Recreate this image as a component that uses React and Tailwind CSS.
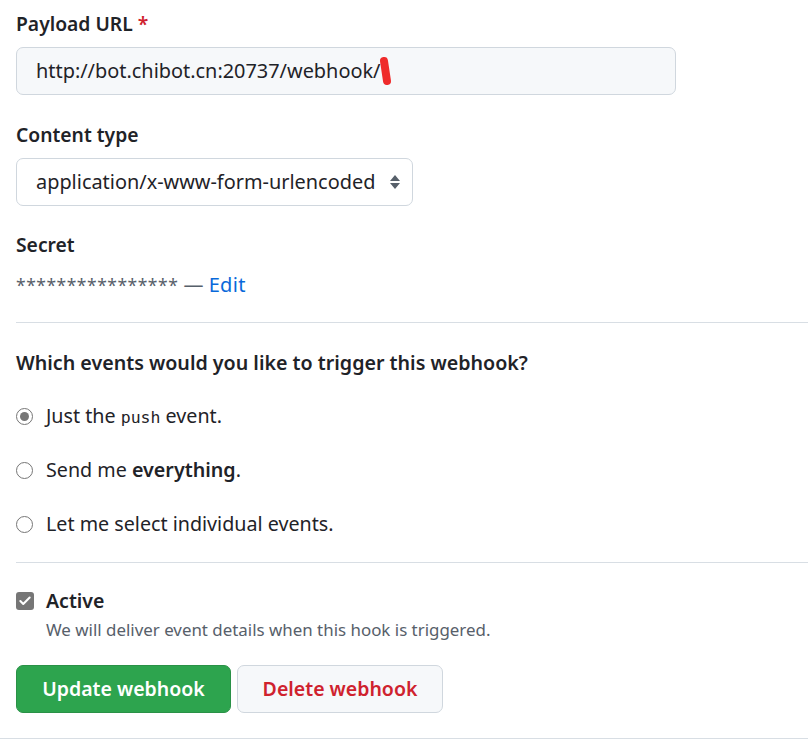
import { Check } from 'lucide-react'

const FONT = { fontFamily: '"Noto Sans", "Liberation Sans", sans-serif' }

function Radio({ checked, children }) {
  return (
    <label className="flex items-center gap-[13px] h-[24px]">
      <span className="w-[17px] h-[17px] rounded-full border border-[#767676] bg-white flex items-center justify-center">
        {checked && <span className="w-[9px] h-[9px] rounded-full bg-[#767676]" />}
      </span>
      <span className="text-[19.7px] text-[#1f2328]">{children}</span>
    </label>
  )
}

export default function App() {
  return (
    <div className="w-[808px] h-[741px] bg-white overflow-hidden text-[#1f2328]" style={FONT}>
      <div className="pl-[16px]">
        {/* Payload URL */}
        <div className="pt-[10px]">
          <div className="text-[19.3px] font-semibold leading-[28px]">
            Payload URL <span className="text-[#cf222e]">*</span>
          </div>
          <div className="mt-[9px] w-[660px] h-[48px] rounded-[7px] border border-[#d0d7de] bg-[#f6f8fa] flex items-center pl-[19px] text-[19.9px]">
            <span>http://bot.chibot.cn:20737/webhook/</span>
            <svg width="14" height="30" viewBox="0 0 14 30" className="-ml-[1px]">
              <path d="M5 5 L8 25" stroke="#ef2b2b" strokeWidth="8" strokeLinecap="round" />
            </svg>
          </div>
        </div>

        {/* Content type */}
        <div className="pt-[26px]">
          <div className="text-[19.3px] font-semibold leading-[28px]">Content type</div>
          <div className="mt-[9px] w-[397px] h-[48px] rounded-[7px] border border-[#d0d7de] bg-white flex items-center justify-between pl-[19px] pr-[12px] text-[19.9px]">
            <span>application/x-www-form-urlencoded</span>
            <svg width="10" height="16" viewBox="0 0 10 16">
              <path d="M5 1 L10 7 L0 7 Z M0 9 L10 9 L5 15 Z" fill="#57606a" />
            </svg>
          </div>
        </div>

        {/* Secret */}
        <div className="pt-[25px]">
          <div className="text-[19.3px] font-semibold leading-[28px]">Secret</div>
          <div className="mt-[14px] text-[20px] leading-[24px]">
            <span className="text-[17.5px] text-[#57606a] tracking-[0.5px]">****************</span>
            <span className="text-[#57606a]"> — </span>
            <span className="text-[#0969da] tracking-[0.3px]">Edit</span>
          </div>
        </div>
      </div>

      <div className="ml-[16px] mt-[25px] border-t border-[#d8dee4]" />

      <div className="pl-[16px]">
        <div className="pt-[26px] text-[19.65px] font-semibold leading-[28px]">
          Which events would you like to trigger this webhook?
        </div>
        <div className="mt-[27px] flex flex-col gap-[30px]">
          <Radio checked>
            Just the <span className="text-[16.5px]" style={{ fontFamily: '"DejaVu Sans Mono", monospace' }}>push</span> event.
          </Radio>
          <Radio>
            Send me <span className="font-semibold">everything</span>.
          </Radio>
          <Radio>Let me select individual events.</Radio>
        </div>
      </div>

      <div className="ml-[16px] mt-[26px] border-t border-[#d8dee4]" />

      <div className="pl-[16px]">
        <div className="pt-[26px] flex items-center gap-[12px]">
          <span className="w-[18px] h-[18px] rounded-[3px] bg-[#767676] flex items-center justify-center">
            <Check className="w-[14px] h-[14px] text-white" strokeWidth={3.5} />
          </span>
          <span className="text-[19.5px] font-semibold leading-[24px]">Active</span>
        </div>
        <div className="pl-[30px] mt-[5px] text-[16.9px] text-[#57606a] leading-[24px]">
          We will deliver event details when this hook is triggered.
        </div>

        <div className="mt-[23px] flex gap-[6px]">
          <button className="w-[215px] h-[48px] rounded-[7px] bg-[#2da44e] border border-[#2a9147] text-white text-[19.5px] font-semibold">
            Update webhook
          </button>
          <button className="w-[206px] h-[48px] rounded-[7px] bg-[#f6f8fa] border border-[#d0d7de] text-[#cf222e] text-[19.5px] font-semibold">
            Delete webhook
          </button>
        </div>
      </div>

      <div className="mt-[25px] border-t border-[#d8dee4]" />
    </div>
  )
}
